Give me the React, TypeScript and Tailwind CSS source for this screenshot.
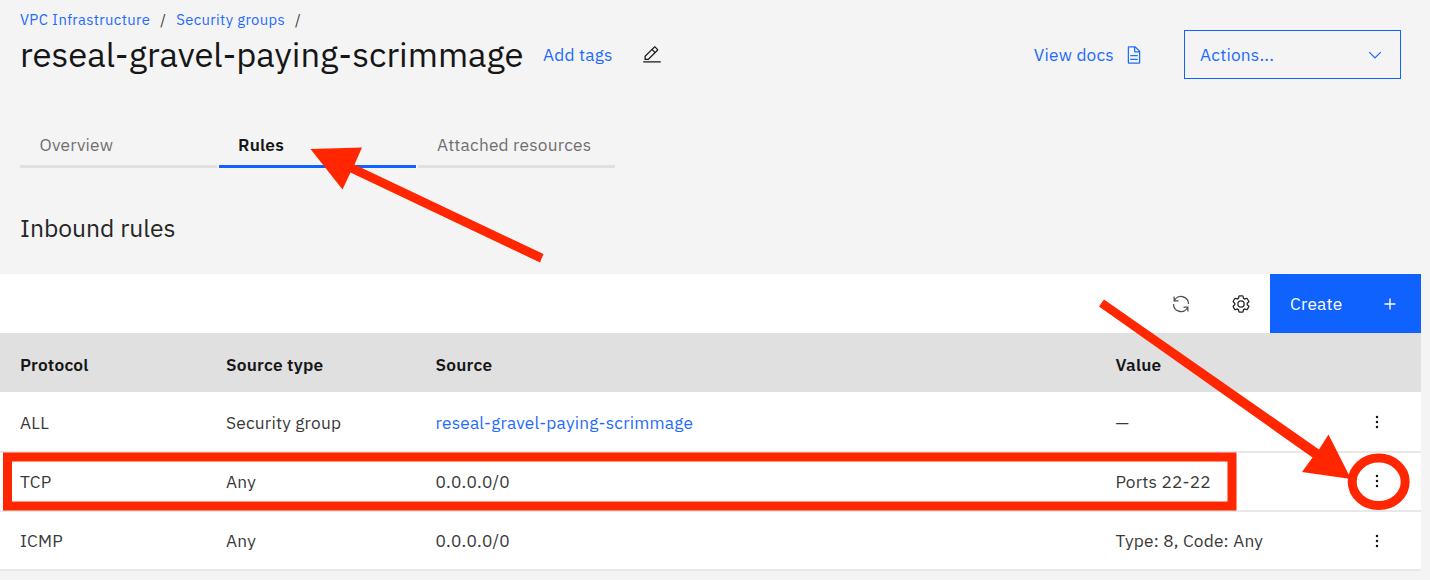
import type { ReactNode } from "react";

type IconProps = { d: string; className: string; viewBox?: string };

function Icon({ d, className, viewBox = "0 0 32 32" }: IconProps) {
  return (
    <svg viewBox={viewBox} className={className} fill="currentColor" fillRule="evenodd" aria-hidden="true">
      <path d={d} />
    </svg>
  );
}

const EDIT =
  "M2 26H30V28H2z M25.4 9c.8-.8.8-2 0-2.8l-3.6-3.6c-.8-.8-2-.8-2.8 0l-15 15V24h6.4L25.4 9z M20.4 4L24 7.6l-3 3L17.4 7 20.4 4z M6 22v-3.6l10-10 3.6 3.6-10 10H6z";
const DOCUMENT =
  "M25.7 9.3l-7-7C18.5 2.1 18.3 2 18 2H8C6.9 2 6 2.9 6 4v24c0 1.1.9 2 2 2h16c1.1 0 2-.9 2-2V10C26 9.7 25.9 9.5 25.7 9.3z M18 4.4l5.6 5.6H18V4.4z M24 28H8V4h8v6c0 1.1.9 2 2 2h6V28z M10 22h12v2H10z M10 16h12v2H10z";
const CHEVRON = "M8 11L3 6 3.7 5.3 8 9.6 12.3 5.3 13 6z";
const RENEW =
  "M12 10H6.78A11 11 0 0 1 27 16h2A13 13 0 0 0 6 7.68V4H4v8h8z M20 22h5.22A11 11 0 0 1 5 16H3a13 13 0 0 0 23 8.32V28h2V20H20z";
const SETTINGS =
  "M27,16.76c0-.25,0-.5,0-.76s0-.51,0-.77l1.92-1.68A2,2,0,0,0,29.3,11L26.94,7a2,2,0,0,0-1.73-1,2,2,0,0,0-.64.1l-2.43.82a11.35,11.35,0,0,0-1.31-.75l-.51-2.52a2,2,0,0,0-2-1.61H13.64a2,2,0,0,0-2,1.61l-.51,2.52a11.48,11.48,0,0,0-1.32.75L7.43,6.06A2,2,0,0,0,6.79,6,2,2,0,0,0,5.06,7L2.7,11a2,2,0,0,0,.41,2.51L5,15.24c0,.25,0,.5,0,.76s0,.51,0,.77L3.11,18.45A2,2,0,0,0,2.7,21L5.06,25a2,2,0,0,0,1.73,1,2,2,0,0,0,.64-.1l2.43-.82a11.35,11.35,0,0,0,1.31.75l.51,2.52a2,2,0,0,0,2,1.61h4.72a2,2,0,0,0,2-1.61l.51-2.52a11.48,11.48,0,0,0,1.32-.75l2.42.82a2,2,0,0,0,.64.1,2,2,0,0,0,1.73-1L29.3,21a2,2,0,0,0-.41-2.51ZM25.21,24l-3.43-1.16a8.86,8.86,0,0,1-2.71,1.57L18.36,28H13.64l-.71-3.55a9.36,9.36,0,0,1-2.7-1.57L6.79,24,4.43,20l2.72-2.4a8.9,8.9,0,0,1,0-3.13L4.43,12,6.79,8l3.43,1.16a8.86,8.86,0,0,1,2.71-1.57L13.64,4h4.72l.71,3.55a9.36,9.36,0,0,1,2.7,1.57L25.21,8,27.57,12l-2.72,2.4a8.9,8.9,0,0,1,0,3.13L27.57,20Z M16,22a6,6,0,1,1,6-6A5.94,5.94,0,0,1,16,22Zm0-10a3.91,3.91,0,0,0-4,4,3.91,3.91,0,0,0,4,4,3.91,3.91,0,0,0,4-4A3.91,3.91,0,0,0,16,12Z";
const ADD = "M17 15V8h-2v7H8v2h7v7h2v-7h7v-2z";

function Overflow() {
  return (
    <svg viewBox="0 0 32 32" className="mr-[34.5px] mb-px ml-auto size-5 text-[#161616]" fill="currentColor" aria-hidden="true">
      <circle cx="16" cy="8" r="2" />
      <circle cx="16" cy="16" r="2" />
      <circle cx="16" cy="24" r="2" />
    </svg>
  );
}

function Row({ className, children }: { className: string; children: ReactNode }) {
  return (
    <div className={`grid grid-cols-[206px_209.5px_680px_1fr_80px] items-center pl-5 ${className}`}>{children}</div>
  );
}

export default function App() {
  return (
    <div className="relative h-[583px] w-[1430px] overflow-hidden bg-white font-['IBM_Plex_Sans','Roboto',sans-serif] text-[17.3px] tracking-[0.2px] text-[#393939]">
      <div className="flex h-[580px] flex-col bg-[#f4f4f4]">
        <nav className="flex h-[30px] items-center pt-[10px] pl-5 text-[14.8px] leading-5 tracking-[0.36px] text-[#1f6bff]">
          <a>VPC Infrastructure</a>
          <span className="pl-[10px] text-[#393939]">/</span>
          <a className="pl-[10px]">Security groups</a>
          <span className="pl-[10px] text-[#393939]">/</span>
        </nav>

        <header className="flex h-[49px] items-center pl-5 text-[#1f6bff]">
          <h1 className="w-[523px] text-[34.6px] leading-[49px] tracking-normal text-[#161616]">
            reseal-gravel-paying-scrimmage
          </h1>
          <a className="pt-px">Add tags</a>
          <Icon d={EDIT} className="ml-[29px] size-5 text-[#161616]" />
          <a className="ml-auto pt-px">View docs</a>
          <Icon d={DOCUMENT} className="ml-[10px] size-5" />
          <button className="mr-[29px] ml-[40px] flex h-[49px] w-[217px] items-center justify-between border border-[#0f62fe] px-[15px]">
            <span className="pt-px">Actions...</span>
            <Icon d={CHEVRON} viewBox="0 0 16 16" className="size-5" />
          </button>
        </header>

        <div className="mt-[44px] ml-5 flex h-[45px] gap-[2px] leading-[44px]">
          <div className="w-[197px] border-b-[3px] border-[#e0e0e0] pl-[19.5px] text-[#6f6f6f]">Overview</div>
          <div className="w-[197px] border-b-[3px] border-[#0f62fe] pl-[19px] font-semibold text-[#161616]">
            Rules
          </div>
          <div className="w-[197px] border-b-[3px] border-[#e0e0e0] pl-[19px] text-[#6f6f6f]">
            Attached resources
          </div>
        </div>

        <h2 className="h-[106px] pt-[44px] pl-5 text-[24.7px] leading-8 tracking-normal text-[#262626]">
          Inbound rules
        </h2>

        <section className="w-[1421px] bg-white">
          <div className="flex h-[59px] items-center justify-end">
            <Icon d={RENEW} className="size-5 text-[#525252]" />
            <Icon d={SETTINGS} className="mr-[19px] ml-[40px] size-5 text-[#262626]" />
            <button className="flex h-[59px] w-[151px] items-center justify-between bg-[#0f62fe] pr-[20px] pl-5 text-white">
              <span className="pt-px">Create</span>
              <Icon d={ADD} className="size-[22px]" />
            </button>
          </div>
          <Row className="h-[59px] bg-[#e0e0e0] pt-[4px] font-semibold text-[#161616]">
            <span>Protocol</span>
            <span>Source type</span>
            <span>Source</span>
            <span>Value</span>
          </Row>
          <Row className="h-[61px] border-b-2 border-[#e8e8e8] pt-[2px]">
            <span>ALL</span>
            <span>Security group</span>
            <a className="text-[#1f6bff]">reseal-gravel-paying-scrimmage</a>
            <span>—</span>
            <Overflow />
          </Row>
          <Row className="h-[59px] border-b-2 border-[#e8e8e8]">
            <span>TCP</span>
            <span>Any</span>
            <span>0.0.0.0/0</span>
            <span>Ports 22-22</span>
            <Overflow />
          </Row>
          <Row className="h-[59px] border-b-2 border-[#e8e8e8] pt-px">
            <span>ICMP</span>
            <span>Any</span>
            <span>0.0.0.0/0</span>
            <span>Type: 8, Code: Any</span>
            <Overflow />
          </Row>
        </section>
      </div>

      <svg
        viewBox="0 0 1430 583"
        className="pointer-events-none absolute inset-0 h-[583px] w-[1430px]"
        fill="#ff2600"
        aria-hidden="true"
      >
        <path d="M310.5 149L362 147.5L354.5 164.5L543.5 254L540 262.5L350.5 172.5L342.5 189.5z" />
        <path d="M1104 299.5L1319 449.5L1328.5 434.5L1351 479L1302 472L1312.5 457.5L1099 306.5z" />
        <rect x="7.5" y="457" width="1224.5" height="49" fill="none" stroke="#ff2600" strokeWidth="9" />
        <ellipse cx="1378.7" cy="481.8" rx="26.5" ry="23.7" fill="none" stroke="#ff2600" strokeWidth="9" />
      </svg>
    </div>
  );
}
